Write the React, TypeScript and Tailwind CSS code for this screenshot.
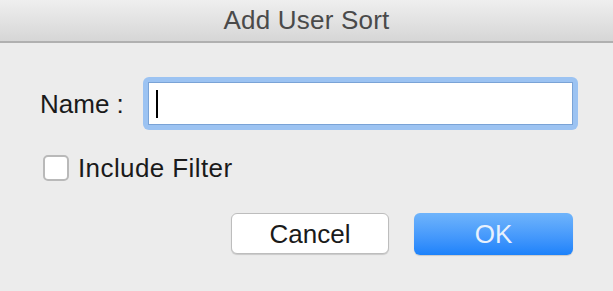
import React from "react";

const font = { fontFamily: '"Liberation Sans", Arial, sans-serif' };

export default function App() {
  return (
    <div className="w-[613px] h-[291px] bg-[#ececec] flex flex-col overflow-hidden" style={font}>
      <div className="h-[43px] shrink-0 flex items-center justify-center bg-gradient-to-b from-[#efefef] to-[#d6d6d6] border-b-2 border-[#b0b0b0]">
        <span className="text-[26px] leading-none text-[#4a4a4a] tracking-[0.2px] -mt-[2px]">Add User Sort</span>
      </div>

      <div className="flex flex-col pl-[38px] pr-[35px]">
        <div className="flex items-center mt-[34px]">
          <label className="text-[26px] leading-none text-[#1a1a1a] w-[105px] pl-[2px]">Name :</label>
          <div className="flex-1 h-[53px] rounded-[6px] bg-[#9cc3f2] p-[5px]">
            <div className="h-full bg-white border border-[#7aa3d6] flex items-center pl-[7px]">
              <span className="w-[2px] h-[28px] bg-black" />
            </div>
          </div>
        </div>

        <div className="flex items-center mt-[25px] ml-[5px]">
          <span className="w-[26px] h-[26px] rounded-[5px] bg-white border-2 border-[#b9b9b9]" />
          <span className="ml-[9px] text-[26px] leading-none text-[#1a1a1a] tracking-[0.4px]">Include Filter</span>
        </div>

        <div className="flex justify-end gap-[25px] mt-[32px] pr-[5px]">
          <button className="w-[158px] h-[41px] rounded-[6px] bg-white border border-[#bdbdbd] shadow-[0_1px_1px_rgba(0,0,0,0.15)] text-[26px] leading-none text-[#1a1a1a]">
            Cancel
          </button>
          <button className="w-[159px] h-[42px] rounded-[6px] bg-gradient-to-b from-[#6fb4fb] to-[#1b82fb] text-[26px] leading-none text-[#e8f1fd] shadow-[0_1px_1px_rgba(0,0,0,0.15)]">
            OK
          </button>
        </div>
      </div>
    </div>
  );
}
